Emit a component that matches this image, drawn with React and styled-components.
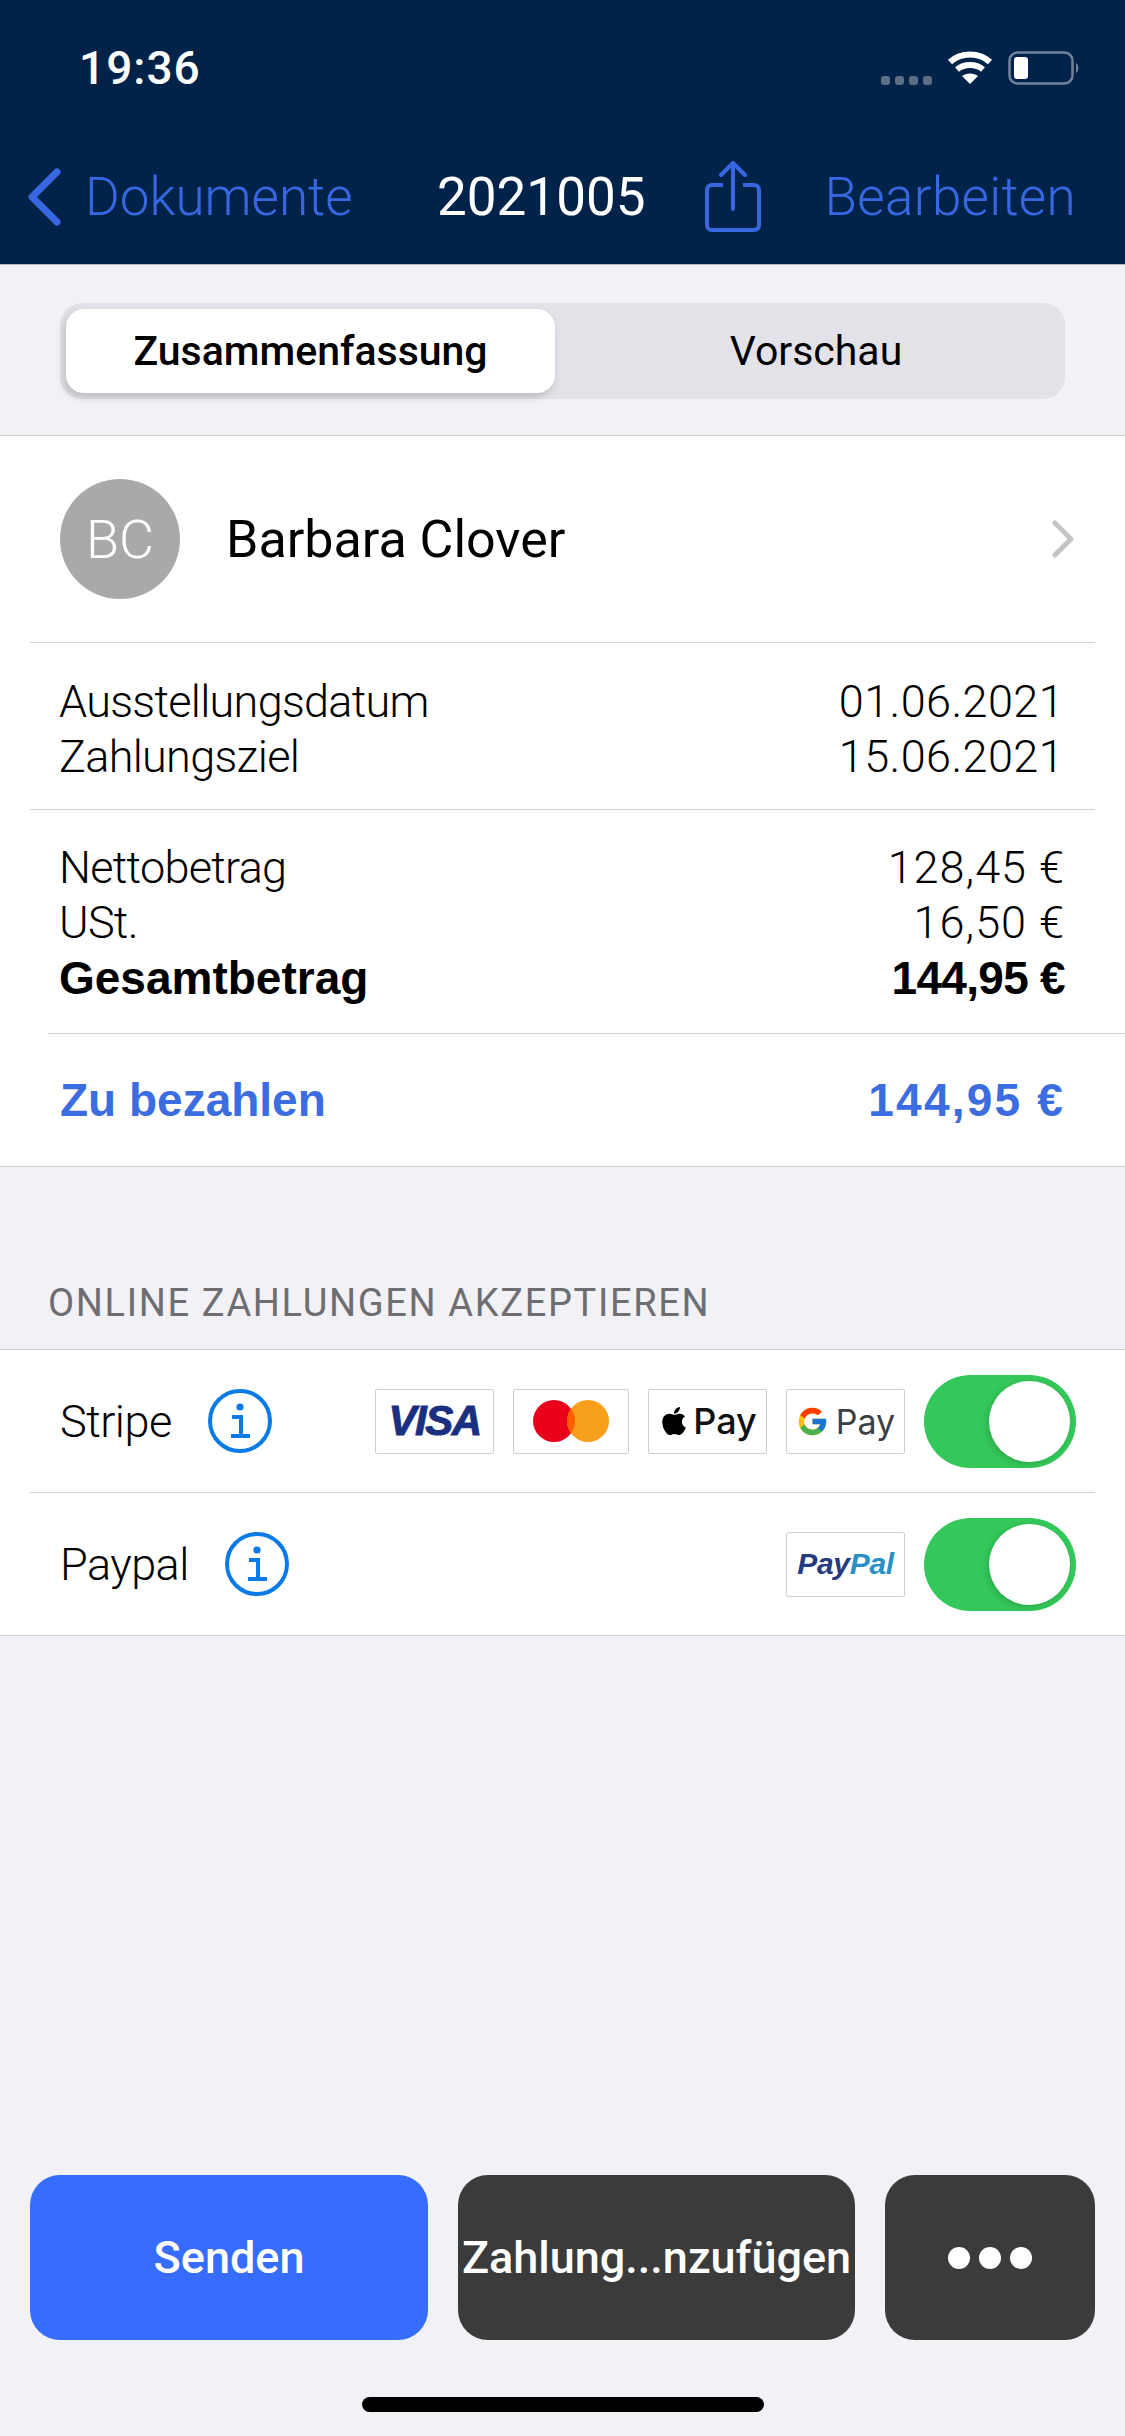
import React from 'react';
import styled, { createGlobalStyle } from 'styled-components';
import { FaApple } from 'react-icons/fa';
import { FcGoogle } from 'react-icons/fc';

const Global = createGlobalStyle`
	html, body {
		margin: 0;
		padding: 0;
		background: #f1f1f6;
	}
	* {
		box-sizing: border-box;
	}
`;

const Page = styled.div`
	display: flex;
	flex-direction: column;
	width: 1125px;
	height: 2436px;
	overflow: hidden;
	background: #f1f1f6;
	font-family: Roboto, "Liberation Sans", sans-serif;
	color: #000;
`;

const Header = styled.header`
	height: 265px;
	flex: none;
	background: #01234a;
	border-bottom: 1px solid #b9bcc4;
`;

const StatusBar = styled.div`
	display: flex;
	align-items: center;
	justify-content: space-between;
	height: 136px;
	padding: 0 45px 0 79px;
`;

const Time = styled.span`
	font: 500 46px Roboto, sans-serif;
	letter-spacing: 1px;
	color: #fff;
`;

const StatusIcons = styled.div`
	display: flex;
	align-items: center;
	gap: 15px;
`;

const SignalDots = styled.div`
	display: flex;
	gap: 5px;
	margin-top: 24px;
`;

const SignalDot = styled.i`
	width: 9px;
	height: 9px;
	border-radius: 3px;
	background: #5c6f86;
`;

const NavBar = styled.nav`
	display: flex;
	align-items: center;
	height: 122px;
	padding: 0 49px 0 27px;
	font-size: 53px;
	font-weight: 300;
	color: #3768e2;
`;

const BackLink = styled.div`
	display: flex;
	align-items: center;
	gap: 24px;
	width: 410px;
`;

const NavTitle = styled.div`
	width: 268px;
	color: #fff;
	font-weight: 400;
`;

const EditLink = styled.div`
	margin-left: auto;
	letter-spacing: 0.3px;
`;

const SegmentWrap = styled.div`
	padding: 38px 60px 36px;
	border-bottom: 1px solid #c9c9ce;
`;

const Segment = styled.div`
	display: flex;
	height: 96px;
	padding: 6px;
	border-radius: 22px;
	background: #e2e2e8;
`;

const SegmentItem = styled.div`
	display: flex;
	align-items: center;
	justify-content: center;
	flex: ${props => (props.$active ? '0 0 489px' : '1')};
	padding-left: ${props => (props.$active ? '0' : '18px')};
	border-radius: 18px;
	font-size: 41px;
	font-weight: ${props => (props.$active ? 500 : 400)};
	background: ${props => (props.$active ? '#fff' : 'transparent')};
	box-shadow: ${props => (props.$active ? '-2px 4px 8px rgba(0, 0, 0, 0.18)' : 'none')};
`;

const Card = styled.section`
	background: #fff;
	border-bottom: 1px solid #d0d0d4;
`;

const ClientRow = styled.div`
	display: flex;
	align-items: center;
	height: 206px;
	padding: 0 50px 0 60px;
`;

const Avatar = styled.div`
	display: flex;
	align-items: center;
	justify-content: center;
	width: 120px;
	height: 120px;
	border-radius: 50%;
	background: #a9a9a9;
	color: #fff;
	font-size: 54px;
	font-weight: 300;
`;

const ClientName = styled.div`
	margin-left: 46px;
	font-size: 52px;
`;

const Chevron = styled.svg`
	display: block;
	margin-left: auto;
`;

const Divider = styled.div`
	height: 1px;
	margin: ${props => props.$margin || '0 30px'};
	background: #d0d0d4;
`;

const ValueGroup = styled.div`
	padding: ${props => props.$padding};
`;

const ValueRow = styled.div`
	display: flex;
	align-items: center;
	justify-content: space-between;
	height: 55px;
	font-size: 45px;
	font-weight: 300;
	letter-spacing: -0.7px;
`;

const TotalRow = styled(ValueRow)`
	font: 700 46px "Liberation Sans", sans-serif;
	letter-spacing: 0;
`;

const Amount = styled.span`
	letter-spacing: ${props => props.$spacing || '0.4px'};
`;

const PayRow = styled.div`
	display: flex;
	align-items: center;
	justify-content: space-between;
	height: 132px;
	padding: 0 60px;
	font: 700 46px "Liberation Sans", sans-serif;
	color: #3b6de0;
`;

const SectionTitle = styled.h2`
	margin: 0;
	padding: 117px 48px 26px;
	font-size: 38px;
	line-height: 39px;
	font-weight: 400;
	color: #6d6d72;
	letter-spacing: 1.65px;
`;

const List = styled.section`
	background: #fff;
	border-top: 1px solid #d0d0d4;
	border-bottom: 1px solid #d0d0d4;
`;

const PaymentRow = styled.div`
	display: flex;
	align-items: center;
	height: 142px;
	padding: 0 49px 0 60px;
`;

const PaymentName = styled.span`
	font-size: 45px;
	font-weight: 300;
	letter-spacing: -0.5px;
`;

const InfoIcon = styled.svg`
	display: block;
	margin-left: 35px;
`;

const Badges = styled.div`
	display: flex;
	gap: 19px;
	margin-left: auto;
	margin-right: 19px;
`;

const Badge = styled.div`
	display: flex;
	align-items: center;
	justify-content: center;
	width: ${props => props.$width || 119}px;
	height: 65px;
	background: #fff;
	border: 1.5px solid #cfcfcf;
	border-radius: 2px;
`;

const VisaMark = styled.span`
	font: italic 700 42px "Liberation Sans", sans-serif;
	letter-spacing: -1.5px;
	color: #1a2f80;
	-webkit-text-stroke: 1px #1a2f80;
`;

const PayLabel = styled.span`
	font: ${props => props.$weight || 500} ${props => props.$size || 36}px Inter, sans-serif;
	color: ${props => props.$color || '#111'};
	margin-left: ${props => props.$gap || 3}px;
`;

const PayPalMark = styled.span`
	font: italic 700 30px "Liberation Sans", sans-serif;
	letter-spacing: -0.3px;
	color: ${props => props.$color};
`;

const Toggle = styled.div`
	display: flex;
	justify-content: flex-end;
	width: 152px;
	height: 93px;
	padding: 6px;
	border-radius: 47px;
	background: #34c759;
`;

const Knob = styled.div`
	width: 81px;
	height: 81px;
	border-radius: 50%;
	background: #fff;
	box-shadow: -2px 2px 6px rgba(0, 0, 0, 0.15);
`;

const Toolbar = styled.div`
	display: flex;
	gap: 30px;
	margin-top: auto;
	padding: 0 30px;
`;

const ActionButton = styled.button`
	display: flex;
	align-items: center;
	justify-content: center;
	flex: ${props => props.$flex};
	height: 165px;
	padding: 0;
	border: none;
	border-radius: 30px;
	background: ${props => props.$background || '#3b3b3b'};
	color: #fff;
	font: 500 45px Roboto, sans-serif;
	white-space: nowrap;
`;

const Dots = styled.div`
	display: flex;
	gap: 9px;
`;

const Dot = styled.i`
	width: 22px;
	height: 22px;
	border-radius: 50%;
	background: #fff;
`;

const HomeBar = styled.div`
	width: 402px;
	height: 15px;
	margin: 57px auto 24px;
	border-radius: 8px;
	background: #000;
`;

const Wifi = () => (
	<svg width="46" height="34" viewBox="0 0 46 34" fill="none" stroke="#fff" strokeWidth="6">
		<path d="M3 11C14 1 32 1 43 11" />
		<path d="M10 18.5C17 12.5 29 12.5 36 18.5" />
		<path d="M23 33L15 25C19 21.5 27 21.5 31 25Z" fill="#fff" stroke="none" />
	</svg>
);

const Battery = () => (
	<svg width="72" height="34" viewBox="0 0 72 34" fill="none">
		<rect x="1.5" y="1.5" width="63" height="31" rx="8" stroke="#71839a" strokeWidth="2.5" />
		<rect x="6" y="6" width="14" height="22" rx="3" fill="#fff" />
		<path d="M68 12C71 13 71 21 68 22Z" fill="#71839a" />
	</svg>
);

const ShareIcon = () => (
	<svg width="56" height="72" viewBox="0 0 56 72" fill="none" stroke="#3768e2" strokeWidth="4" strokeLinecap="round">
		<path d="M18 24H7C4 24 2 26 2 29V64C2 67 4 69 7 69H49C52 69 54 67 54 64V29C54 26 52 24 49 24H38" strokeLinecap="butt" />
		<path d="M28 48V3M16 14L28 2L40 14" />
	</svg>
);

const Info = () => (
	<InfoIcon width="66" height="66" viewBox="0 0 66 66" fill="none" stroke="#0a7ae6">
		<circle cx="33" cy="33" r="30" strokeWidth="4" />
		<circle cx="33" cy="19" r="3.6" fill="#0a7ae6" stroke="none" />
		<path d="M25 29H34V48M24 48H43" strokeWidth="4" />
	</InfoIcon>
);

const App = () => (
	<Page>
		<Global />
		<Header>
			<StatusBar>
				<Time>19:36</Time>
				<StatusIcons>
					<SignalDots>
						<SignalDot />
						<SignalDot />
						<SignalDot />
						<SignalDot />
					</SignalDots>
					<Wifi />
					<Battery />
				</StatusIcons>
			</StatusBar>
			<NavBar>
				<BackLink>
					<svg width="34" height="58" viewBox="0 0 34 58" fill="none" stroke="#3768e2" strokeWidth="7" strokeLinecap="round" strokeLinejoin="round">
						<path d="M30 4L5 29L30 54" />
					</svg>
					Dokumente
				</BackLink>
				<NavTitle>2021005</NavTitle>
				<ShareIcon />
				<EditLink>Bearbeiten</EditLink>
			</NavBar>
		</Header>

		<SegmentWrap>
			<Segment>
				<SegmentItem $active>Zusammenfassung</SegmentItem>
				<SegmentItem>Vorschau</SegmentItem>
			</Segment>
		</SegmentWrap>

		<Card>
			<ClientRow>
				<Avatar>BC</Avatar>
				<ClientName>Barbara Clover</ClientName>
				<Chevron width="24" height="38" viewBox="0 0 24 38" fill="none" stroke="#c4c4c7" strokeWidth="5" strokeLinecap="round" strokeLinejoin="round">
					<path d="M4 3L20 19L4 35" />
				</Chevron>
			</ClientRow>
			<Divider />
			<ValueGroup $padding="31px 61px 25px 59px">
				<ValueRow>
					<span>Ausstellungsdatum</span>
					<Amount>01.06.2021</Amount>
				</ValueRow>
				<ValueRow>
					<span>Zahlungsziel</span>
					<Amount>15.06.2021</Amount>
				</ValueRow>
			</ValueGroup>
			<Divider />
			<ValueGroup $padding="30px 60px 28px 59px">
				<ValueRow>
					<span>Nettobetrag</span>
					<Amount $spacing="1px">128,45 €</Amount>
				</ValueRow>
				<ValueRow>
					<span>USt.</span>
					<Amount $spacing="1px">16,50 €</Amount>
				</ValueRow>
				<TotalRow>
					<span>Gesamtbetrag</span>
					<Amount $spacing="-0.7px">144,95 €</Amount>
				</TotalRow>
			</ValueGroup>
			<Divider $margin="0 0 0 48px" />
			<PayRow>
				<span>Zu bezahlen</span>
				<Amount $spacing="2.2px">144,95 €</Amount>
			</PayRow>
		</Card>

		<SectionTitle>ONLINE ZAHLUNGEN AKZEPTIEREN</SectionTitle>

		<List>
			<PaymentRow>
				<PaymentName>Stripe</PaymentName>
				<Info />
				<Badges>
					<Badge>
						<VisaMark>VISA</VisaMark>
					</Badge>
					<Badge $width={116}>
						<svg width="76" height="42" viewBox="0 0 76 42">
							<circle cx="21" cy="21" r="21" fill="#eb001b" />
							<circle cx="55" cy="21" r="21" fill="#f79e1b" />
							<path d="M38 8.6a21 21 0 0 1 0 24.8a21 21 0 0 1 0-24.8Z" fill="#ff5f00" />
						</svg>
					</Badge>
					<Badge>
						<FaApple size={32} color="#000" />
						<PayLabel>Pay</PayLabel>
					</Badge>
					<Badge>
						<FcGoogle size={33} />
						<PayLabel $weight={400} $size={34} $gap={7} $color="#3c4043">Pay</PayLabel>
					</Badge>
				</Badges>
				<Toggle>
					<Knob />
				</Toggle>
			</PaymentRow>
			<Divider />
			<PaymentRow>
				<PaymentName>Paypal</PaymentName>
				<Info />
				<Badges>
					<Badge>
						<PayPalMark $color="#253b80">Pay</PayPalMark>
						<PayPalMark $color="#2a8fc4">Pal</PayPalMark>
					</Badge>
				</Badges>
				<Toggle>
					<Knob />
				</Toggle>
			</PaymentRow>
		</List>

		<Toolbar>
			<ActionButton $flex="0 0 398px" $background="#366dff">Senden</ActionButton>
			<ActionButton $flex="0 0 397px">Zahlung...nzufügen</ActionButton>
			<ActionButton $flex="1">
				<Dots>
					<Dot />
					<Dot />
					<Dot />
				</Dots>
			</ActionButton>
		</Toolbar>
		<HomeBar />
	</Page>
);

export default App;
